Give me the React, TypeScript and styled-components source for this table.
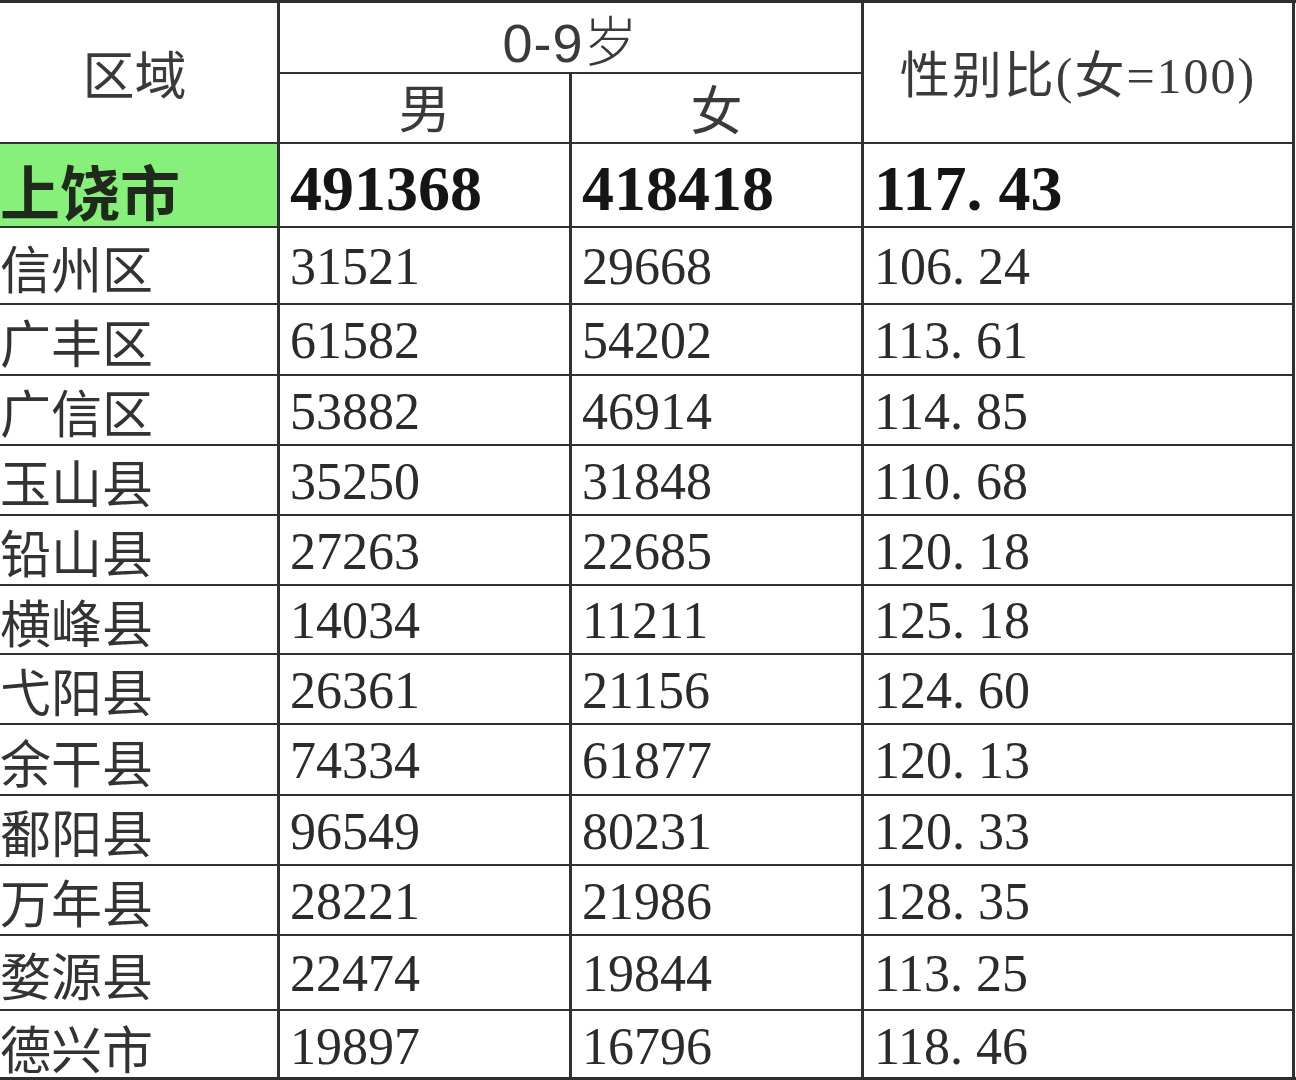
import React from "react";
import styled, { createGlobalStyle, css } from "styled-components";

const GlobalStyle = createGlobalStyle`
  html, body {
    margin: 0;
    padding: 0;
    background: #ffffff;
  }
  body {
    font-family: "Liberation Serif", "Noto Sans CJK SC", serif;
    color: #2b2b2b;
  }
`;

type Row = {
  area: string;
  male: number;
  female: number;
  ratio: string;
  height: number;
};

const total = {
  area: "上饶市",
  male: 491368,
  female: 418418,
  ratio: "117.43",
};

const rows: Row[] = [
  { area: "信州区", male: 31521, female: 29668, ratio: "106.24", height: 77 },
  { area: "广丰区", male: 61582, female: 54202, ratio: "113.61", height: 71 },
  { area: "广信区", male: 53882, female: 46914, ratio: "114.85", height: 70 },
  { area: "玉山县", male: 35250, female: 31848, ratio: "110.68", height: 70 },
  { area: "铅山县", male: 27263, female: 22685, ratio: "120.18", height: 70 },
  { area: "横峰县", male: 14034, female: 11211, ratio: "125.18", height: 69 },
  { area: "弋阳县", male: 26361, female: 21156, ratio: "124.60", height: 70 },
  { area: "余干县", male: 74334, female: 61877, ratio: "120.13", height: 71 },
  { area: "鄱阳县", male: 96549, female: 80231, ratio: "120.33", height: 70 },
  { area: "万年县", male: 28221, female: 21986, ratio: "128.35", height: 70 },
  { area: "婺源县", male: 22474, female: 19844, ratio: "113.25", height: 75 },
  { area: "德兴市", male: 19897, female: 16796, ratio: "118.46", height: 69 },
];

const rowTemplate = ["71px", "70px", "84px", ...rows.map((r) => `${r.height}px`)].join(" ");

const Sheet = styled.div`
  display: grid;
  grid-template-columns: 280px 292px 292px 431px;
  grid-template-rows: ${rowTemplate};
  width: 1296px;
  height: 1080px;
  box-sizing: border-box;
  border-top: 3px solid #2e2e2e;
  border-bottom: 3px solid #2e2e2e;
  overflow: hidden;
`;

const Cell = styled.div<{ $last?: boolean; $highlight?: boolean }>`
  display: flex;
  align-items: center;
  box-sizing: border-box;
  border-bottom: 2px solid #303030;
  border-right: 3px solid #303030;
  min-width: 0;
  white-space: nowrap;
  ${({ $last }) =>
    $last &&
    css`
      border-bottom: none;
    `}
  ${({ $highlight }) =>
    $highlight &&
    css`
      background: #87f07b;
    `}
`;

const HeadCell = styled(Cell)<{ $col: string; $row: string; $lift?: number; $shift?: number }>`
  grid-column: ${({ $col }) => $col};
  grid-row: ${({ $row }) => $row};
  justify-content: center;
  font-size: 52px;
  color: #3a3a3a;
  padding-top: ${({ $lift }) => $lift ?? 0}px;
  padding-bottom: ${({ $lift }) => ($lift && $lift < 0 ? -$lift : 0)}px;
  padding-right: ${({ $shift }) => $shift ?? 0}px;
`;

const AgeLabel = styled.span`
  font-family: "Liberation Sans", "Noto Sans CJK SC", sans-serif;
  font-size: 54px;
  font-weight: 300;
  color: #3a3a3a;
  letter-spacing: 1px;
`;

const RatioLabel = styled.span`
  font-size: 50px;
  letter-spacing: 2px;
`;

const AreaCell = styled(Cell)<{ $bold?: boolean }>`
  justify-content: flex-start;
  padding-top: ${({ $bold }) => ($bold ? 8 : 2)}px;
  font-size: ${({ $bold }) => ($bold ? 60 : 51)}px;
  font-weight: ${({ $bold }) => ($bold ? 700 : 400)};
  color: ${({ $bold }) => ($bold ? "#1f2a1c" : "#333")};
`;

const NumCell = styled(Cell)<{ $bold?: boolean }>`
  justify-content: flex-start;
  padding-left: 10px;
  padding-top: ${({ $bold }) => ($bold ? 8 : 2)}px;
  font-size: ${({ $bold }) => ($bold ? 64 : 52)}px;
  font-weight: ${({ $bold }) => ($bold ? 700 : 400)};
  color: ${({ $bold }) => ($bold ? "#151515" : "#2b2b2b")};
`;

const Point = styled.span`
  margin-right: 0.25em;
`;

function Ratio({ value }: { value: string }) {
  const [int, frac] = value.split(".");
  return (
    <>
      {int}
      <Point>.</Point>
      {frac}
    </>
  );
}

export default function App() {
  return (
    <>
      <GlobalStyle />
      <Sheet>
        <HeadCell $col="1" $row="1 / span 2" $shift={8}>
          区域
        </HeadCell>
        <HeadCell $col="2 / span 2" $row="1" $lift={2}>
          <AgeLabel>0-9岁</AgeLabel>
        </HeadCell>
        <HeadCell $col="4" $row="1 / span 2" $lift={-4}>
          <RatioLabel>性别比(女=100)</RatioLabel>
        </HeadCell>
        <HeadCell $col="2" $row="2" $lift={-6}>
          男
        </HeadCell>
        <HeadCell $col="3" $row="2" $lift={-2}>
          女
        </HeadCell>

        <AreaCell $bold $highlight>
          {total.area}
        </AreaCell>
        <NumCell $bold>{total.male}</NumCell>
        <NumCell $bold>{total.female}</NumCell>
        <NumCell $bold>
          <Ratio value={total.ratio} />
        </NumCell>

        {rows.map((r, i) => {
          const last = i === rows.length - 1;
          return (
            <React.Fragment key={r.area}>
              <AreaCell $last={last}>{r.area}</AreaCell>
              <NumCell $last={last}>{r.male}</NumCell>
              <NumCell $last={last}>{r.female}</NumCell>
              <NumCell $last={last}>
                <Ratio value={r.ratio} />
              </NumCell>
            </React.Fragment>
          );
        })}
      </Sheet>
    </>
  );
}
